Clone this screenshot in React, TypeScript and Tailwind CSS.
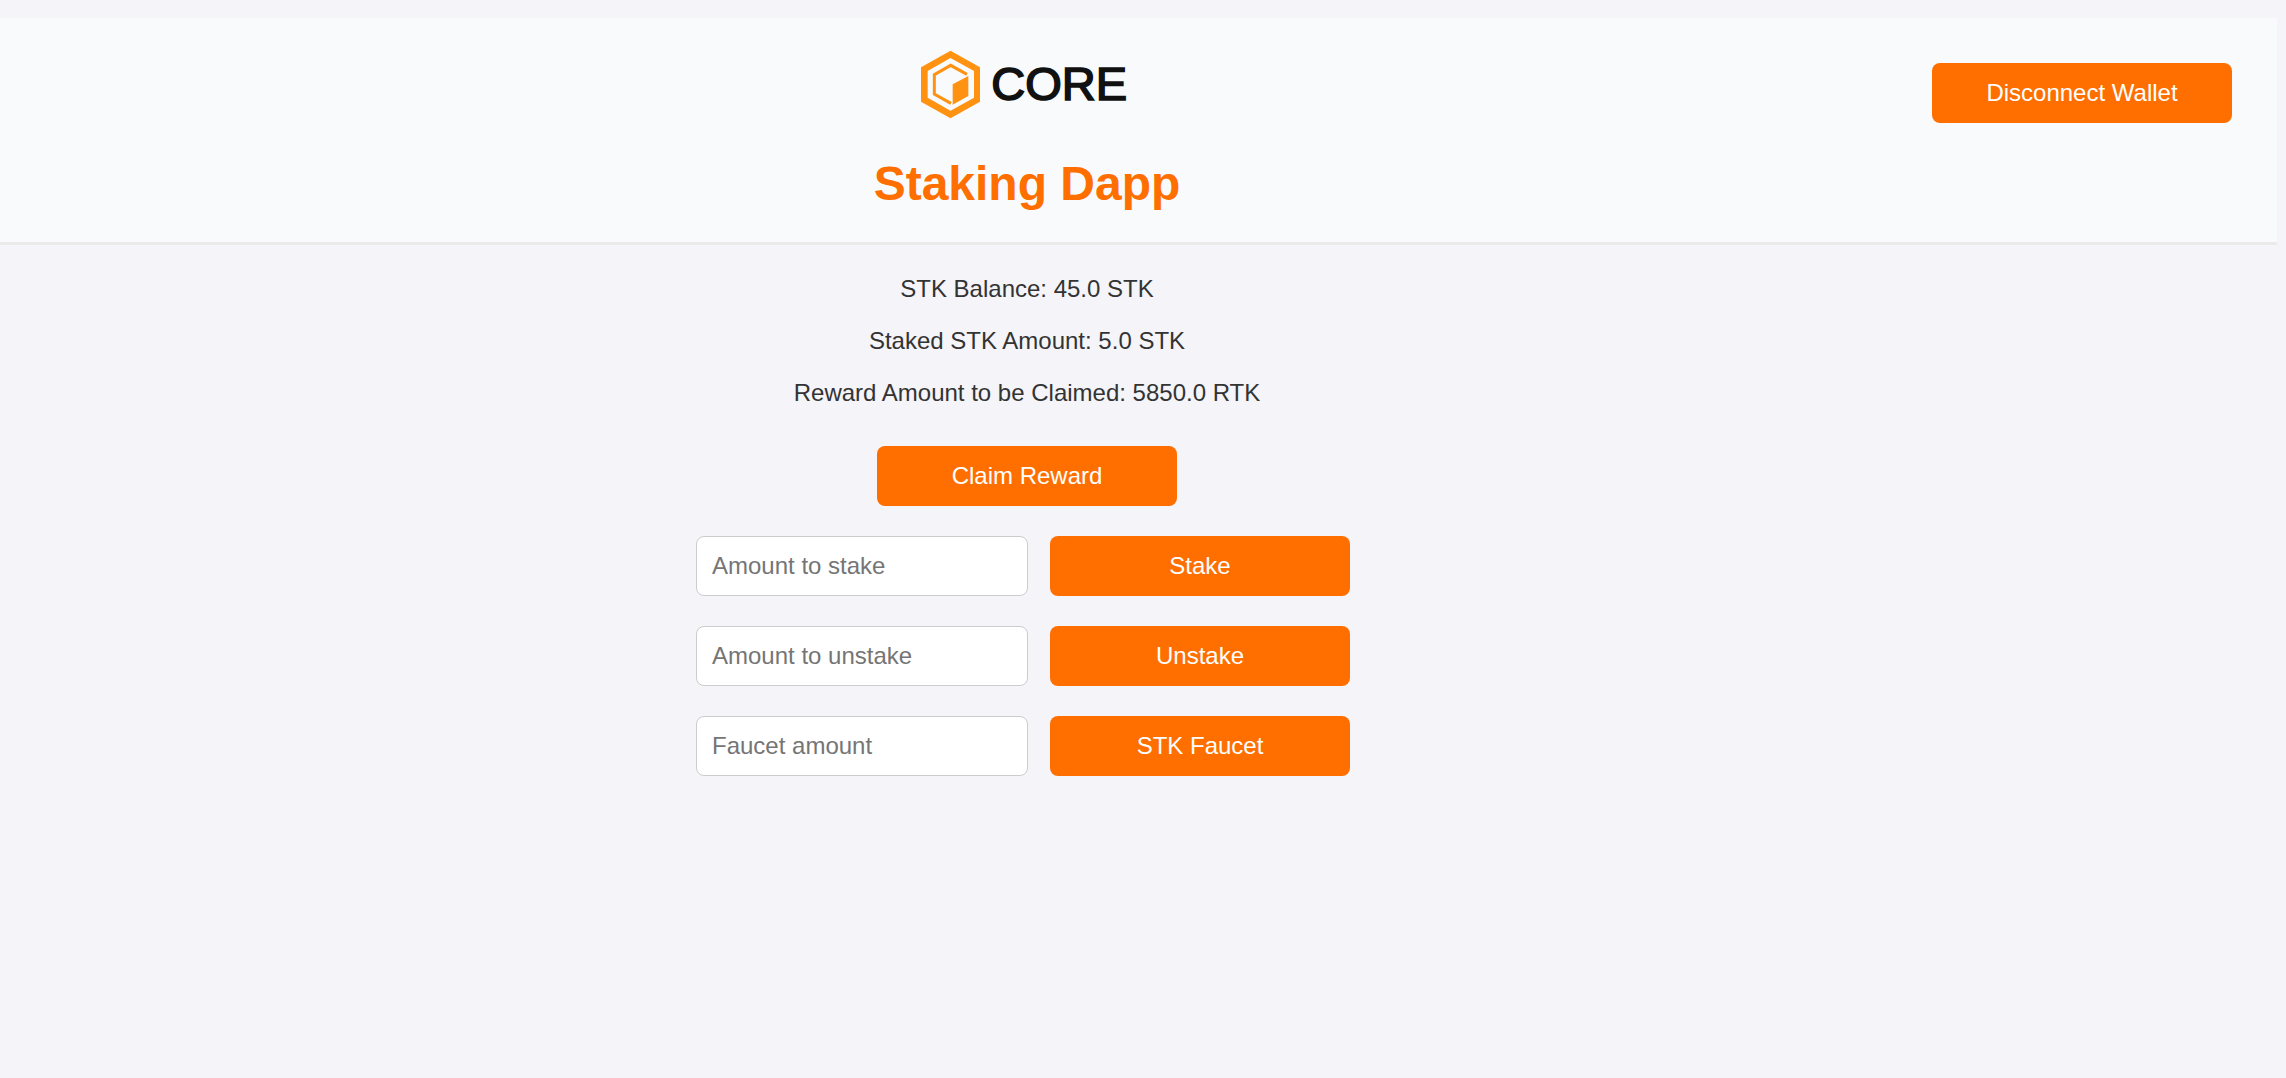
import type { ReactNode } from "react";

function CoreLogo() {
  return (
    <svg
      viewBox="60 30 642 207"
      className="h-[69px] w-[214px]"
      role="img"
      aria-label="Core"
    >
      <path
        fill="#ff9211"
        fillRule="evenodd"
        d="M151.500 32L240 82V185L151.500 235L63 185V82ZM151.500 54L83 93V173L151.500 212L222 173V93Z"
      />
      <path
        fill="none"
        stroke="#ff9211"
        strokeWidth="9"
        d="M201 103L152 76L103 104V162L153 190"
      />
      <path fill="#ff9211" d="M158 133L205 108V168L158 194Z" />
      <text
        x="274"
        y="181"
        fontFamily="'Liberation Sans', Arial, sans-serif"
        fontSize="141"
        fill="#111111"
        stroke="#111111"
        strokeWidth="5"
      >
        CORE
      </text>
    </svg>
  );
}

function ActionButton({ children }: { children: ReactNode }) {
  return (
    <button
      type="button"
      className="h-[60px] w-[300px] shrink-0 cursor-pointer rounded-lg bg-[#ff6f00] text-2xl text-white"
    >
      {children}
    </button>
  );
}

const stats = [
  "STK Balance: 45.0 STK",
  "Staked STK Amount: 5.0 STK",
  "Reward Amount to be Claimed: 5850.0 RTK",
];

const actions = [
  { placeholder: "Amount to stake", label: "Stake" },
  { placeholder: "Amount to unstake", label: "Unstake" },
  { placeholder: "Faucet amount", label: "STK Faucet" },
];

export default function App() {
  return (
    <div className="min-h-screen bg-[#f4f4f9] pt-[18px] font-['Liberation_Sans',Arial,sans-serif] text-[#333333]">
      <header className="mr-[9px] flex items-start border-b-3 border-[#eaeaea] bg-[#f8fafc] pr-[45px] pl-[122px]">
        <div className="flex flex-1 flex-col items-center pt-8 pb-[30px]">
          <CoreLogo />
          <h1 className="mt-[37px] text-center text-5xl leading-[56px] font-bold text-[#ff6f00]">
            Staking Dapp
          </h1>
        </div>
        <div className="pt-[45px]">
          <ActionButton>Disconnect Wallet</ActionButton>
        </div>
      </header>

      <main className="flex flex-col items-center pt-[30px] pr-[232px]">
        <div className="flex flex-col gap-6 text-center text-2xl leading-[28px]">
          {stats.map((stat) => (
            <p key={stat}>{stat}</p>
          ))}
        </div>
        <div className="mt-[39px]">
          <ActionButton>Claim Reward</ActionButton>
        </div>
        <div className="mt-[30px] flex flex-col gap-[30px] pr-2">
          {actions.map(({ placeholder, label }) => (
            <form
              key={label}
              className="flex gap-[22px]"
              onSubmit={(event) => event.preventDefault()}
            >
              <input
                type="text"
                aria-label={placeholder}
                placeholder={placeholder}
                className="h-[60px] w-[332px] rounded-lg border border-[#cccccc] bg-white px-[15px] text-2xl placeholder:text-[#757575]"
              />
              <ActionButton>{label}</ActionButton>
            </form>
          ))}
        </div>
      </main>
    </div>
  );
}
